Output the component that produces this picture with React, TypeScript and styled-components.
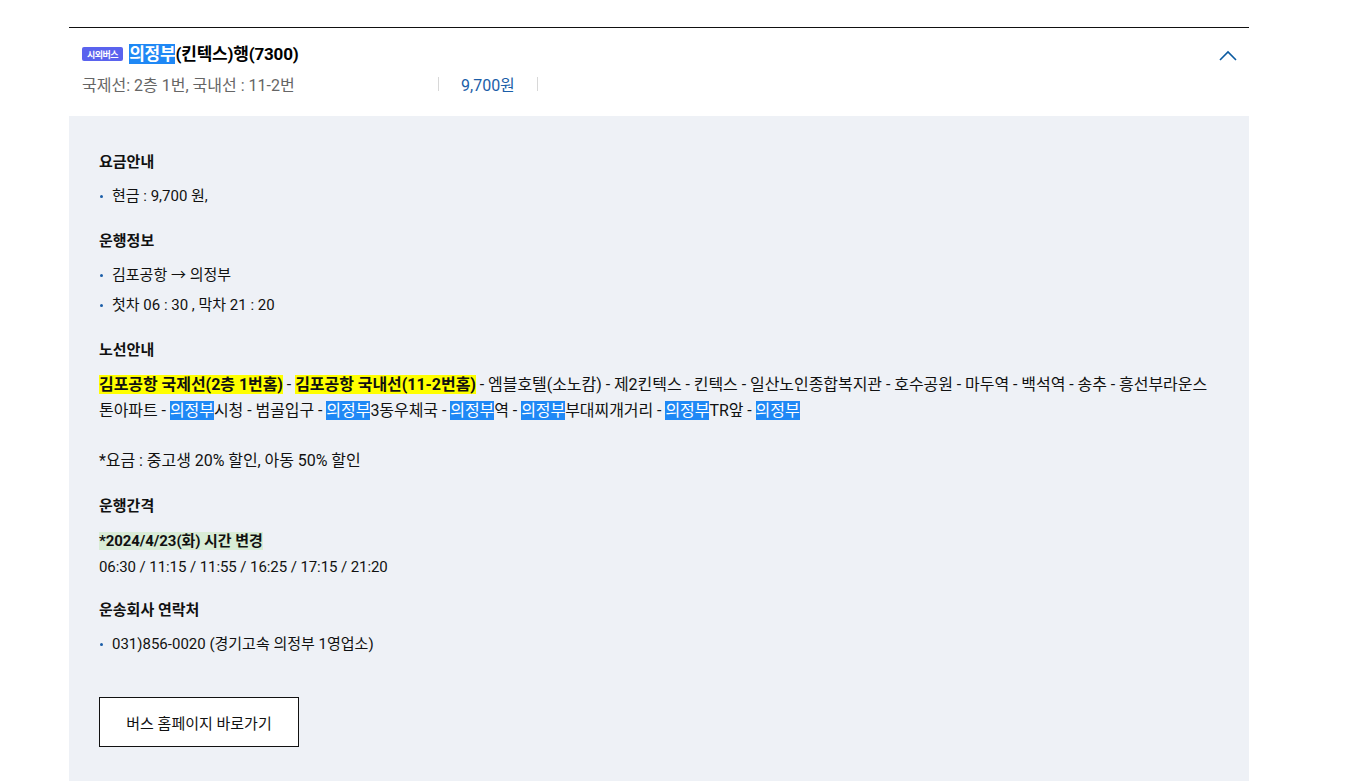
import React from "react";
import styled, { createGlobalStyle } from "styled-components";

const Global = createGlobalStyle`
  html, body { margin: 0; padding: 0; background: #fff; }
  body { font-family: Roboto, "Noto Sans CJK KR", sans-serif; color: #111; }
  * { box-sizing: border-box; }
`;

const Page = styled.div`
  padding: 27px 0 0 69px;
`;

const Card = styled.section`
  width: 1180px;
  border-top: 1px solid #111;
`;

const Header = styled.header`
  display: flex;
  justify-content: space-between;
  align-items: flex-start;
  padding: 16px 11px 22px 13px;
`;

const HeaderMain = styled.div`
  display: flex;
  flex-direction: column;
  gap: 10px;
`;

const TitleRow = styled.div`
  display: flex;
  align-items: center;
  gap: 6px;
  height: 20px;
`;

const Badge = styled.span`
  display: inline-flex;
  align-items: center;
  justify-content: center;
  height: 14px;
  padding: 0 5px;
  border-radius: 2px;
  background: #5a63ee;
  color: #fff;
  font-size: 9px;
  font-weight: 700;
  letter-spacing: -0.5px;
`;

const Title = styled.h2`
  margin: 0;
  font-size: 17px;
  font-weight: 700;
  line-height: 20px;
  letter-spacing: -0.2px;
  color: #000;
`;

const Mark = styled.span<{ $tone: "blue" | "yellow" | "green" }>`
  background: ${(p) => (p.$tone === "blue" ? "#1f88f5" : p.$tone === "yellow" ? "#ffff00" : "#d9ecd6")};
  color: ${(p) => (p.$tone === "blue" ? "#fff" : "inherit")};
  font-weight: inherit;
`;

const SubRow = styled.div`
  display: flex;
  align-items: center;
  height: 20px;
  font-size: 16px;
  color: #666;
`;

const SubInfo = styled.span`
  width: 356px;
`;

const Sep = styled.span`
  width: 1px;
  height: 14px;
  background: #d8d8d8;
`;

const Price = styled.span`
  width: 98px;
  padding-left: 22px;
  color: #1b5ea8;
`;

const Toggle = styled.button`
  border: 0;
  background: none;
  padding: 0;
  margin-top: 5px;
  width: 20px;
  height: 14px;
  cursor: pointer;
`;

const Panel = styled.div`
  background: #eef1f6;
  padding: 35px 30px 40px;
  min-height: 680px;
`;

const Section = styled.div`
  & + & { margin-top: 19px; }
`;

const Heading = styled.h3`
  margin: 0;
  font-size: 15px;
  font-weight: 700;
  line-height: 22px;
  color: #111;
`;

const List = styled.ul`
  list-style: none;
  margin: 8px 0 0;
  padding: 0;
`;

const Item = styled.li`
  position: relative;
  padding-left: 13px;
  line-height: 30px;
  font-size: 15px;
  &::before {
    content: "";
    position: absolute;
    left: 1px;
    top: 14px;
    width: 3px;
    height: 3px;
    border-radius: 50%;
    background: #1b5ea8;
  }
`;

const Text = styled.p<{ $large?: boolean }>`
  margin: 11px 0 0;
  font-size: ${(p) => (p.$large ? "16px" : "15px")};
  letter-spacing: ${(p) => (p.$large ? "-0.05px" : "-0.08px")};
  line-height: 26px;
`;

const Note = styled.span`
  display: inline-block;
  margin-top: -2px;
  vertical-align: top;
`;

const Strong = styled.b`
  font-weight: 700;
`;

const LinkButton = styled.a`
  display: inline-flex;
  align-items: center;
  justify-content: center;
  margin-top: 38px;
  width: 200px;
  height: 50px;
  background: #fff;
  border: 1px solid #111;
  font-size: 15px;
  color: #111;
  text-decoration: none;
`;

const B = () => <Mark $tone="blue">의정부</Mark>;

export default function App() {
  return (
    <>
      <Global />
      <Page>
        <Card>
          <Header>
            <HeaderMain>
              <TitleRow>
                <Badge>시외버스</Badge>
                <Title>
                  <Mark $tone="blue">의정부</Mark>(킨텍스)행(7300)
                </Title>
              </TitleRow>
              <SubRow>
                <SubInfo>국제선: 2층 1번, 국내선 : 11-2번</SubInfo>
                <Sep />
                <Price>9,700원</Price>
                <Sep />
              </SubRow>
            </HeaderMain>
            <Toggle aria-label="접기">
              <svg width="20" height="14" viewBox="0 0 20 14">
                <polyline points="2,11 10,3 18,11" fill="none" stroke="#0b5aa0" strokeWidth="1.6" />
              </svg>
            </Toggle>
          </Header>
          <Panel>
            <Section>
              <Heading>요금안내</Heading>
              <List>
                <Item>현금 : 9,700 원,</Item>
              </List>
            </Section>
            <Section>
              <Heading>운행정보</Heading>
              <List>
                <Item>김포공항 → 의정부</Item>
                <Item>첫차 06 : 30 , 막차 21 : 20</Item>
              </List>
            </Section>
            <Section>
              <Heading>노선안내</Heading>
              <Text $large>
                <Strong><Mark $tone="yellow">김포공항 국제선(2층 1번홈)</Mark></Strong> -{" "}
                <Strong><Mark $tone="yellow">김포공항 국내선(11-2번홈)</Mark></Strong> - 엠블호텔(소노캄) - 제2킨텍스 - 킨텍스 - 일산노인종합복지관 - 호수공원 - 마두역 - 백석역 - 송추 - 흥선부라운스
                <br />
                톤아파트 - <B />시청 - 범골입구 - <B />3동우체국 - <B />역 - <B />부대찌개거리 - <B />TR앞 - <B />
                <br />
                <br />
                <Note>*요금 : 중고생 20% 할인, 아동 50% 할인</Note>
              </Text>
            </Section>
            <Section>
              <Heading>운행간격</Heading>
              <Text>
                <Strong><Mark $tone="green">*2024/4/23(화) 시간 변경</Mark></Strong>
                <br />
                06:30 / 11:15 / 11:55 / 16:25 / 17:15 / 21:20
              </Text>
            </Section>
            <Section>
              <Heading>운송회사 연락처</Heading>
              <List>
                <Item>031)856-0020 (경기고속 의정부 1영업소)</Item>
              </List>
            </Section>
            <LinkButton href="#">버스 홈페이지 바로가기</LinkButton>
          </Panel>
        </Card>
      </Page>
    </>
  );
}
